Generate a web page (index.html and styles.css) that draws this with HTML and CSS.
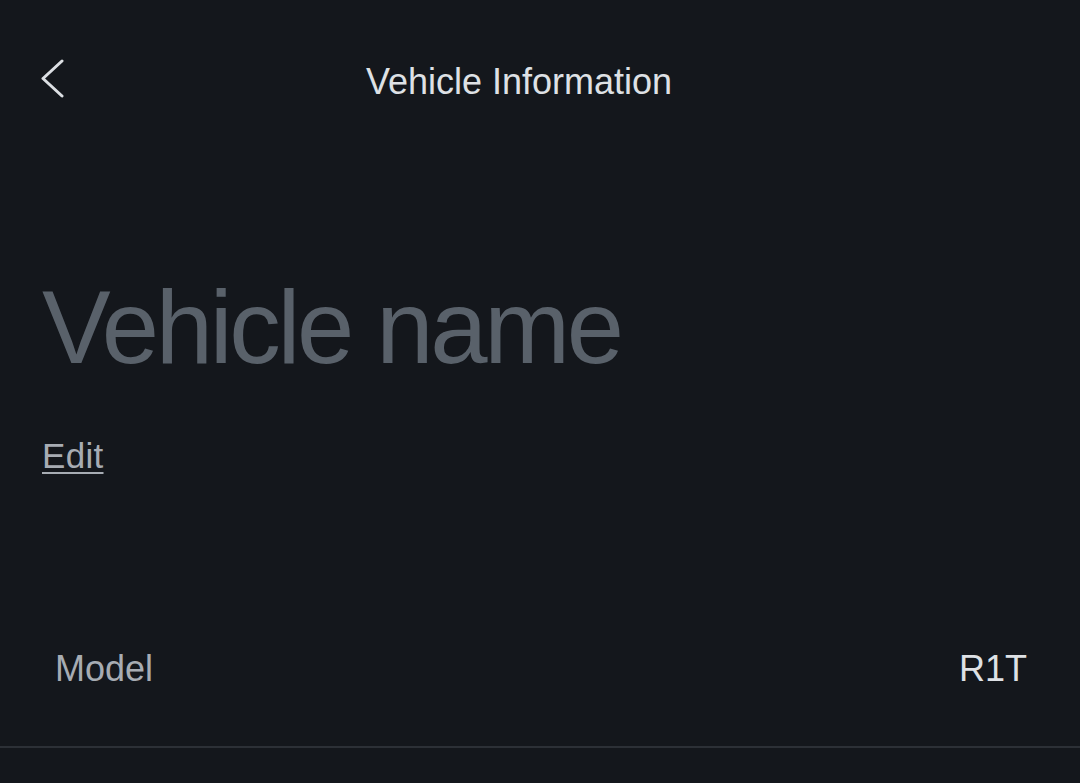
FILE: index.html
```html
<!DOCTYPE html>
<html lang="en">
  <head>
    <meta charset="UTF-8" />
    <meta name="viewport" content="width=device-width, initial-scale=1.0" />
    <title>Vehicle Information</title>
    <link rel="stylesheet" href="styles.css">
  </head>
  <body>
    <div class="screen">
      <div class="topbar">
        <button class="back" aria-label="Back">
          <svg width="26" height="40" viewBox="0 0 26 40">
            <path d="M22 3 L3 20.5 L22 38" fill="none" stroke="#dcdfe3" stroke-width="3" stroke-linecap="round" stroke-linejoin="round" />
          </svg>
        </button>
        <h1 class="title">Vehicle Information</h1>
      </div>

      <div class="name-block">
        <div class="vehicle-name">Vehicle name</div>
        <a class="edit" href="#">Edit</a>
      </div>

      <div class="row">
        <span class="row-label">Model</span>
        <span class="row-value">R1T</span>
      </div>
    </div>
  </body>
</html>
```

FILE: styles.css
```css
:root {
  --background: #14171c;
  --text: #dee1e5;
  --muted: #a7acb3;
  --faint: #59616a;
  --divider: #2c3036;
}

body {
  margin: 0;
  background: var(--background);
  color: var(--text);
  font-family: "Liberation Sans", Arial, sans-serif;
}

.screen {
  width: 1080px;
  height: 783px;
  overflow: hidden;
}

.topbar {
  position: relative;
  display: flex;
  justify-content: center;
  padding-top: 64px;
}

.back {
  position: absolute;
  left: 40px;
  top: 58px;
  background: none;
  border: none;
  padding: 0;
  cursor: pointer;
}

.title {
  margin: 0 42px 0 0;
  font-size: 36px;
  font-weight: 400;
  line-height: 36px;
  color: var(--text);
}

.name-block {
  margin-top: 176px;
  padding: 0 42px;
}

.vehicle-name {
  font-size: 103px;
  line-height: 103px;
  letter-spacing: -3.3px;
  color: var(--faint);
}

.edit {
  display: inline-block;
  margin-top: 59px;
  font-size: 35px;
  line-height: 35px;
  letter-spacing: 0.3px;
  color: var(--muted);
  text-decoration: underline;
  text-decoration-thickness: 2px;
  text-underline-offset: 4px;
}

.row {
  display: flex;
  justify-content: space-between;
  margin-top: 178px;
  padding: 0 53px 59px 55px;
  border-bottom: 2px solid var(--divider);
  font-size: 36px;
  line-height: 36px;
}

.row-label {
  color: var(--muted);
}

.row-value {
  color: var(--text);
}
```
